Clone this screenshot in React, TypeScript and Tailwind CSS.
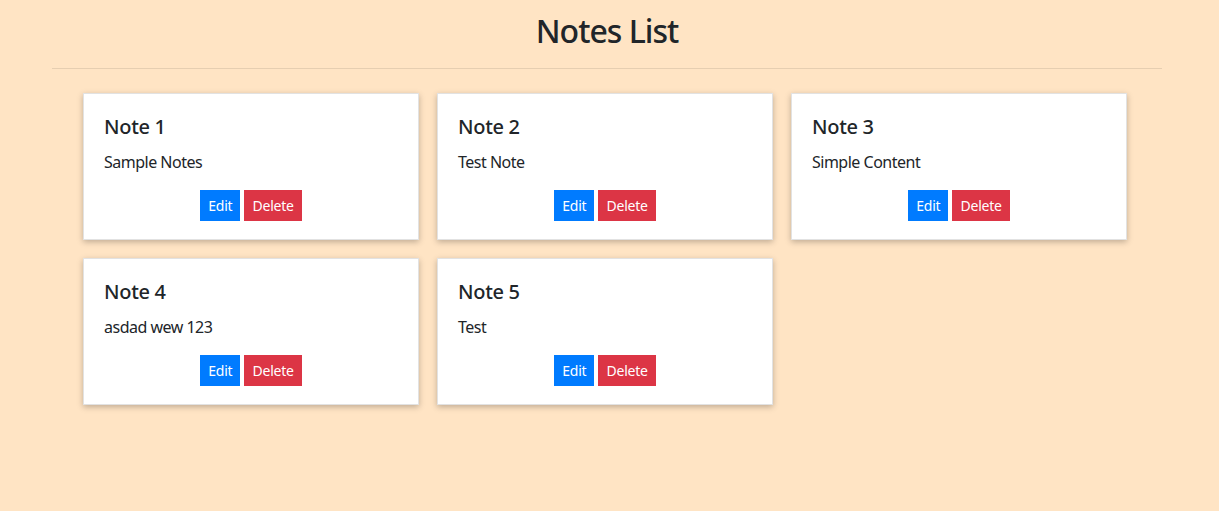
const notes = [
  { id: 1, title: "Note 1", content: "Sample Notes" },
  { id: 2, title: "Note 2", content: "Test Note" },
  { id: 3, title: "Note 3", content: "Simple Content" },
  { id: 4, title: "Note 4", content: "asdad wew 123" },
  { id: 5, title: "Note 5", content: "Test" },
];

function NoteCard({ title, content }: { title: string; content: string }) {
  return (
    <div className="bg-white border border-[#e2e2e2] shadow-[0_2px_6px_rgba(0,0,0,0.25)] px-5 pt-[21px] pb-[18px] text-[#212529]">
      <h5 className="text-[20px] leading-[24px] font-medium tracking-[-0.3px] mb-[11px]">{title}</h5>
      <p className="text-base leading-6 tracking-[-0.5px] mb-4">{content}</p>
      <div className="flex justify-center gap-1">
        <button className="h-[31px] bg-[#007bff] text-white text-sm leading-[21px] tracking-[-0.2px] px-2">
          Edit
        </button>
        <button className="h-[31px] bg-[#dc3545] text-white text-sm leading-[21px] tracking-[-0.2px] px-2">
          Delete
        </button>
      </div>
    </div>
  );
}

export default function App() {
  return (
    <div
      className="min-h-screen bg-[#ffe4c4] text-[#212529]"
      style={{ fontFamily: '"Noto Sans", "Open Sans", sans-serif' }}
    >
      <div className="w-[1110px] ml-[52px]">
        <h2 className="text-[32px] leading-[38px] font-medium tracking-[-1px] text-center pt-[12px] pb-[18px]">
          Notes List
        </h2>
        <hr className="border-t border-[#e6ceb1]" />
        <div className="grid grid-cols-[336px_336px_336px] gap-[18px] pl-[31px] pt-[24px]">
          {notes.map((note) => (
            <NoteCard key={note.id} title={note.title} content={note.content} />
          ))}
        </div>
      </div>
    </div>
  );
}
